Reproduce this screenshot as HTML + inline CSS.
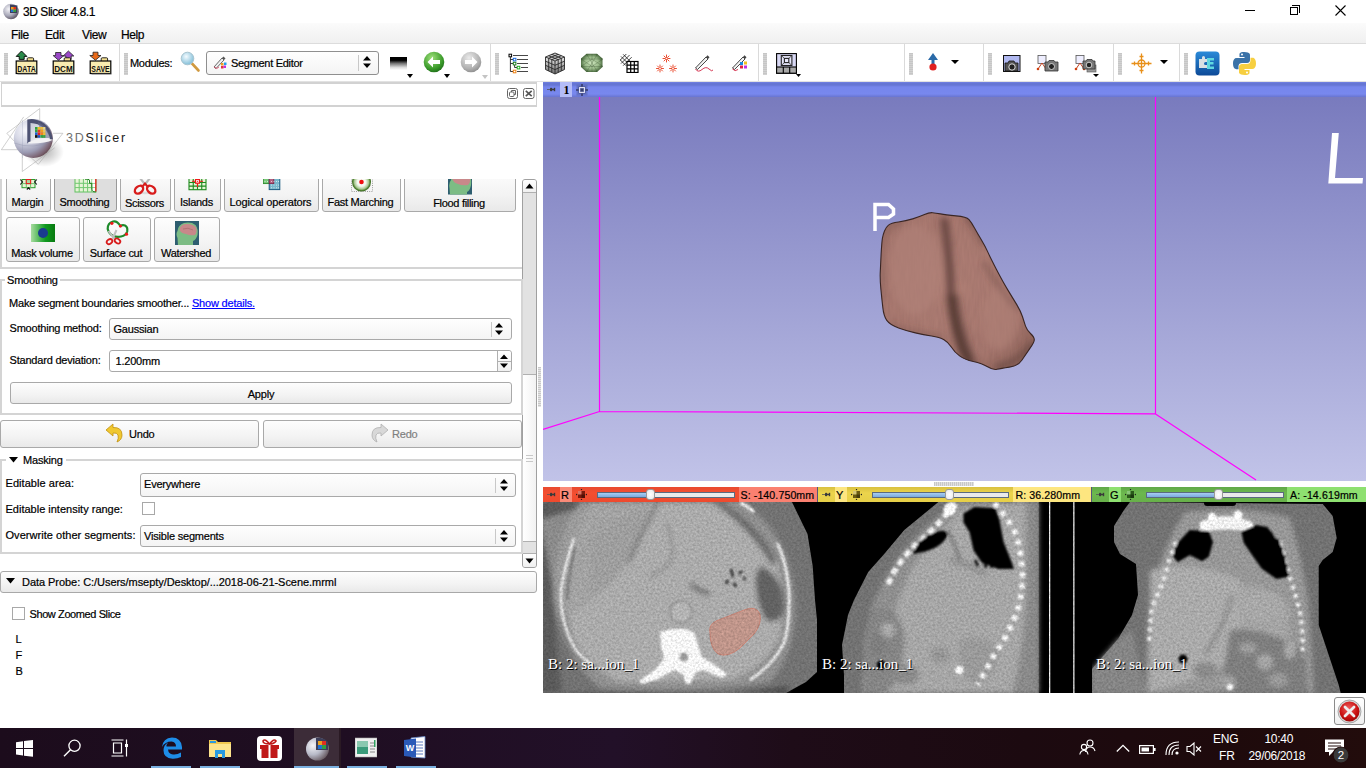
<!DOCTYPE html>
<html><head><meta charset="utf-8">
<style>
*{box-sizing:border-box;margin:0;padding:0}
html,body{width:1366px;height:768px;overflow:hidden;background:#fff;font-family:"Liberation Sans",sans-serif;color:#000}
.a{position:absolute}
.t{position:absolute;white-space:nowrap;font-size:11px;line-height:13px;-webkit-text-stroke:0.2px currentColor}
.btn{position:absolute;border:1px solid #a9a9a9;border-radius:3px;background:linear-gradient(#fdfdfd,#f3f3f3 60%,#e9e9e9)}
.combo{position:absolute;border:1px solid #a9a9a9;border-radius:3px;background:linear-gradient(#fefefe,#f4f4f4)}
.hsep{position:absolute;width:1px;background:#dadada}
.handle{position:absolute;width:4px;height:22px;top:53px;background:repeating-linear-gradient(#c6c6c6 0 1px,#d2d2d2 1px 2px)}
.tri{position:absolute;width:0;height:0;border-left:3.5px solid transparent;border-right:3.5px solid transparent;border-top:4px solid #000}
</style></head><body>

<!-- TITLE BAR -->
<div id="title" class="a" style="left:0;top:0;width:1366px;height:23px;background:#fff">
 <svg class="a" style="left:2px;top:2px" width="18" height="18" viewBox="0 0 18 18">
  <defs><radialGradient id="sph" cx="0.35" cy="0.35" r="0.7"><stop offset="0" stop-color="#f4f4f8"/><stop offset="0.6" stop-color="#a8a8b8"/><stop offset="1" stop-color="#5a5260"/></radialGradient></defs>
  <circle cx="9" cy="9.5" r="7.8" fill="url(#sph)"/>
  <path d="M8 2.5 L15.5 3.5 L15 11 L8 11 Z" fill="#3d3f5a"/>
  <rect x="9" y="5" width="5" height="5" fill="#e8a020"/><rect x="9" y="7.5" width="2.5" height="2.5" fill="#2070d0"/><rect x="11.5" y="5" width="2.5" height="2.5" fill="#e03020"/><rect x="11.5" y="7.5" width="2.5" height="2.5" fill="#30a040"/>
 </svg>
 <div class="t" style="left:23px;top:5px;font-size:12px;line-height:15px;letter-spacing:-0.45px;color:#000">3D Slicer 4.8.1</div>
 <div class="a" style="left:1245px;top:10px;width:10px;height:1px;background:#000"></div>
 <div class="a" style="left:1290px;top:7px;width:8px;height:8px;border:1px solid #000;background:#fff"></div>
 <div class="a" style="left:1292px;top:5px;width:8px;height:8px;border-top:1px solid #000;border-right:1px solid #000"></div>
 <svg class="a" style="left:1335px;top:5px" width="11" height="11" viewBox="0 0 11 11"><path d="M0.5 0.5 L10.5 10.5 M10.5 0.5 L0.5 10.5" stroke="#000" stroke-width="1.1"/></svg>
</div>
<!-- MENU BAR -->
<div id="menubar" class="a" style="left:0;top:23px;width:1366px;height:21px;background:linear-gradient(#fbfbfb,#f0f0f0);border-bottom:1px solid #dcdcdc">
 <div class="t" style="left:11px;top:5px;font-size:12px;line-height:15px;letter-spacing:-0.4px">File</div>
 <div class="t" style="left:45px;top:5px;font-size:12px;line-height:15px;letter-spacing:-0.4px">Edit</div>
 <div class="t" style="left:82px;top:5px;font-size:12px;line-height:15px;letter-spacing:-0.4px">View</div>
 <div class="t" style="left:121px;top:5px;font-size:12px;line-height:15px;letter-spacing:-0.4px">Help</div>
</div>
<!-- TOOLBAR -->
<div id="toolbar" class="a" style="left:0;top:44px;width:1366px;height:38px;background:#fff;border-bottom:1px solid #e2e2e2">
</div>
<div id="tbicons">
 
 <!-- DATA -->
 <svg class="a" style="left:0px;top:48px" width="120" height="30" viewBox="0 48 120 30">
  <path d="M21.5 51 L26.9 56.4 H24.2 V59.4 H19.2 V56.4 H16.2 Z" fill="#2a8a4a" stroke="#000" stroke-width="0.9" stroke-linejoin="round"/>
  <path d="M27.2 61 V58.8 Q27.2 57.8 28.2 57.8 H32.6 Q33.6 57.8 33.6 58.8 V61" fill="#f4e090" stroke="#111" stroke-width="0.9"/>
  <rect x="16.2" y="61" width="20.6" height="12.5" fill="#f8ecb0" stroke="#000" stroke-width="1.2"/>
  <rect x="17.5" y="73.6" width="20" height="1.2" fill="#888" opacity="0.7"/>
  <text x="26.5" y="71.6" font-family="Liberation Sans" font-weight="bold" font-size="9.5" text-anchor="middle" fill="#111" textLength="18.5" lengthAdjust="spacingAndGlyphs">DATA</text>
  <path d="M55.6 52.5 H61 V55.6 H63.8 L58.5 60.2 L53.2 55.6 H55.6 Z" fill="#9a48c8" stroke="#222" stroke-width="0.8" stroke-linejoin="round"/>
  <path d="M68.4 51 L73.8 56 H71.2 V59.5 H65.8 V56 H63.2 Z" fill="#9a48c8" stroke="#222" stroke-width="0.8" stroke-linejoin="round"/>
  <path d="M64.2 61 V58.8 Q64.2 57.8 65.2 57.8 H69.6 Q70.6 57.8 70.6 58.8 V61" fill="#f4e090" stroke="#111" stroke-width="0.9"/>
  <rect x="53.2" y="61" width="20.6" height="12.5" fill="#f8ecb0" stroke="#000" stroke-width="1.2"/>
  <rect x="54.5" y="73.6" width="20" height="1.2" fill="#888" opacity="0.7"/>
  <text x="63.5" y="71.6" font-family="Liberation Sans" font-weight="bold" font-size="9.5" text-anchor="middle" fill="#111" textLength="18.5" lengthAdjust="spacingAndGlyphs">DCM</text>
  <path d="M93 52.2 H98 V55.5 H101 L95.4 60.2 L89.8 55.5 H93 Z" fill="#e86a1a" stroke="#222" stroke-width="0.8" stroke-linejoin="round"/>
  <path d="M101.2 61 V58.8 Q101.2 57.8 102.2 57.8 H106.6 Q107.6 57.8 107.6 58.8 V61" fill="#f4e090" stroke="#111" stroke-width="0.9"/>
  <rect x="90.2" y="61" width="20.6" height="12.5" fill="#f8ecb0" stroke="#000" stroke-width="1.2"/>
  <rect x="91.5" y="73.6" width="20" height="1.2" fill="#888" opacity="0.7"/>
  <text x="100.5" y="71.6" font-family="Liberation Sans" font-weight="bold" font-size="9.5" text-anchor="middle" fill="#111" textLength="18.5" lengthAdjust="spacingAndGlyphs">SAVE</text>
 </svg>
 <div class="handle" style="left:4px"></div>
 <div class="hsep" style="left:119px;top:44px;height:37px"></div>
 <div class="handle" style="left:124px"></div>
 <div class="t" style="left:130px;top:57px;letter-spacing:-0.3px">Modules:</div>
 <!-- magnifier -->
 <svg class="a" style="left:179px;top:50px" width="22" height="23" viewBox="0 0 22 23">
  <defs><radialGradient id="mg" cx="0.4" cy="0.35" r="0.6"><stop offset="0" stop-color="#f4fbff"/><stop offset="1" stop-color="#8cc4dc"/></radialGradient></defs>
  <line x1="13" y1="13.5" x2="19.5" y2="20.5" stroke="#d09a40" stroke-width="2.6" stroke-linecap="round"/>
  <circle cx="8.5" cy="8.5" r="6.3" fill="url(#mg)" stroke="#a8c4d0" stroke-width="1"/>
 </svg>
 <!-- module combo -->
 <div class="combo" style="left:206px;top:51px;width:173px;height:24px;border-color:#8f8f8f">
  <div class="a" style="left:151px;top:3px;width:1px;height:16px;background:#c8c8c8"></div>
 </div>
 <svg class="a" style="left:213px;top:55px" width="14" height="15" viewBox="0 0 14 15">
  <path d="M1 12 L9 3 L11 5 L3 13.5 Z" fill="#f0f0f0" stroke="#444" stroke-width="0.8"/>
  <path d="M9 3 L10.5 1.5 L12.5 3.5 L11 5Z" fill="#555"/>
  <path d="M1 12 Q4 15 6 12" stroke="#e04060" fill="none" stroke-width="0.8"/>
  <rect x="8" y="8" width="2.5" height="2.5" fill="#f0a020"/><rect x="10.5" y="10.5" width="2.5" height="2.5" fill="#c030e0"/><rect x="8" y="11" width="2.5" height="2.5" fill="#e03040"/><rect x="11" y="7.5" width="2.5" height="2.5" fill="#20a0f0"/>
 </svg>
 <div class="t" style="left:231px;top:57px;letter-spacing:-0.3px">Segment Editor</div>
 <svg class="a" style="left:362px;top:55px" width="10" height="14" viewBox="0 0 10 14"><path d="M1 5.5 L5 1 L9 5.5Z M1 8.5 L5 13 L9 8.5Z" fill="#000"/></svg>
 <!-- window level -->
 <div class="a" style="left:390px;top:57px;width:17px;height:13px;background:linear-gradient(#000 0,#000 25%,#777 50%,#ddd 80%,#fff 100%)"></div>
 <div class="tri" style="left:407px;top:74px"></div>
 <!-- back -->
 <svg class="a" style="left:423px;top:51px" width="22" height="22" viewBox="0 0 22 22">
  <defs><radialGradient id="gb" cx="0.4" cy="0.3" r="0.75"><stop offset="0" stop-color="#9ee07a"/><stop offset="0.7" stop-color="#3a9a2a"/><stop offset="1" stop-color="#1d6a18"/></radialGradient>
  <radialGradient id="gg" cx="0.4" cy="0.3" r="0.75"><stop offset="0" stop-color="#eaeaea"/><stop offset="0.7" stop-color="#b0b0b0"/><stop offset="1" stop-color="#8a8a8a"/></radialGradient></defs>
  <circle cx="11" cy="11" r="10.3" fill="url(#gb)"/>
  <path d="M4.5 11 L10 5.5 L10 9 L17 9 L17 13 L10 13 L10 16.5 Z" fill="#fff"/>
 </svg>
 <div class="tri" style="left:444px;top:74px"></div>
 <svg class="a" style="left:460px;top:51px" width="22" height="22" viewBox="0 0 22 22">
  <circle cx="11" cy="11" r="10.3" fill="url(#gg)"/>
  <path d="M17.5 11 L12 5.5 L12 9 L5 9 L5 13 L12 13 L12 16.5 Z" fill="#fff"/>
 </svg>
 <div class="tri" style="left:482px;top:75px;border-top-color:#c4c4c4"></div>
 <div class="hsep" style="left:490px;top:44px;height:37px"></div>
 <div class="handle" style="left:495px"></div>
 <!-- tree -->
 <svg class="a" style="left:508px;top:53px" width="21" height="21" viewBox="508 53 21 21">
  <path d="M510.4 57 V71.5 H513 M510.4 59.5 H513 M510.4 63.5 H513 M514.6 65 V67.5 H517" stroke="#222" stroke-width="0.9" fill="none"/>
  <rect x="509" y="54.2" width="2.6" height="2.6" fill="#fff" stroke="#000" stroke-width="1"/>
  <rect x="513.3" y="58.3" width="2.6" height="2.6" fill="#fff" stroke="#1a6ae0" stroke-width="1"/>
  <rect x="513.3" y="62.3" width="2.6" height="2.6" fill="#fff" stroke="#208020" stroke-width="1"/>
  <rect x="517.2" y="66.3" width="2.6" height="2.6" fill="#fff" stroke="#20b020" stroke-width="1"/>
  <rect x="513.3" y="70.2" width="2.6" height="2.6" fill="#fff" stroke="#f08010" stroke-width="1"/>
  <path d="M513 55.5 H528 M517 59.5 H528 M517 63.5 H528 M521 67.5 H528 M517 71.5 H528" stroke="#333" stroke-width="0.9"/>
 </svg>
 <!-- cube -->
 <svg class="a" style="left:543px;top:51px" width="24" height="24" viewBox="0 0 24 24">
  <defs><linearGradient id="cbf" x1="0" y1="0" x2="0" y2="1"><stop offset="0" stop-color="#e8e8e8"/><stop offset="1" stop-color="#707070"/></linearGradient></defs>
  <path d="M12 2 L21.5 6 L12 10 L2.5 6Z" fill="#c8c8c8"/>
  <path d="M2.5 6 L12 10 L12 23 L2.5 18.5Z" fill="url(#cbf)"/>
  <path d="M21.5 6 L12 10 L12 23 L21.5 18.5Z" fill="url(#cbf)"/>
  <g stroke="#2a2a2a" stroke-width="0.9" fill="none">
   <path d="M12 2 L21.5 6 L12 10 L2.5 6Z M2.5 6 V18.5 L12 23 L21.5 18.5 V6 M12 10 V23"/>
   <path d="M5.7 4.7 L15.2 8.7 M8.8 3.3 L18.3 7.3 M5.7 7.3 L15.2 3.3 M8.8 8.7 L18.3 4.7"/>
   <path d="M2.5 10.2 L12 14.3 L21.5 10.2 M2.5 14.3 L12 18.6 L21.5 14.3"/>
   <path d="M5.7 7.3 V20 M8.8 8.7 V21.5 M15.2 8.7 V21.5 M18.3 7.3 V20"/>
  </g>
 </svg>
 <!-- mesh -->
 <svg class="a" style="left:580px;top:53px" width="24" height="20" viewBox="0 0 24 20">
  <defs><radialGradient id="msh" cx="0.5" cy="0.5" r="0.55"><stop offset="0" stop-color="#d0e8c0"/><stop offset="0.6" stop-color="#98b888"/><stop offset="1" stop-color="#3e5e34"/></radialGradient></defs>
  <path d="M6.5 0.8 H17 L22.5 5.5 V14 L17 19 H6.5 L1 14 V5.5Z" fill="url(#msh)"/>
  <path d="M1 6 H23 M1 13.5 H23 M12 1 V19 M6.5 1 L17.5 19 M17.5 1 L6.5 19 M1 6 L12 13.5 L23 6 M1 13.5 L12 6 L23 13.5" stroke="#2e4a26" stroke-width="0.5" opacity="0.55" fill="none"/>
 </svg>
 <!-- grid -->
 <svg class="a" style="left:620px;top:54px" width="19" height="19" viewBox="0 0 19 19">
  <g transform="rotate(-45 6 6)"><path d="M0 2 H12 M0 5 H12 M0 8 H12 M2 0 V10 M5 0 V10 M8 0 V10" stroke="#222" stroke-width="0.8"/></g>
  <rect x="7" y="7.5" width="11" height="11" fill="#fff" stroke="#000" stroke-width="1.2"/>
  <path d="M10.7 7.5 V18.5 M14.3 7.5 V18.5 M7 11.2 H18 M7 14.8 H18" stroke="#000" stroke-width="1.2"/>
 </svg>
 <!-- fiducials -->
 <svg class="a" style="left:656px;top:54px" width="21" height="19" viewBox="0 0 21 19">
  <g stroke="#e83a1a" stroke-width="0.9" stroke-linecap="round">
   <path d="M10.5 1 V3.5 M10.5 5.5 V8 M7 4.5 H9.3 M11.7 4.5 H14 M8 2 L9.5 3.5 M11.5 5.5 L13 7 M13 2 L11.5 3.5 M9.5 5.5 L8 7"/>
   <path d="M4 11 V13.5 M4 15.5 V18 M0.5 14.5 H2.8 M5.2 14.5 H7.5 M1.5 12 L3 13.5 M5 15.5 L6.5 17 M6.5 12 L5 13.5 M3 15.5 L1.5 17"/>
   <path d="M17 11 V13.5 M17 15.5 V18 M13.5 14.5 H15.8 M18.2 14.5 H20.5 M14.5 12 L16 13.5 M18 15.5 L19.5 17 M19.5 12 L18 13.5 M16 15.5 L14.5 17"/>
  </g>
 </svg>
 <!-- pen -->
 <svg class="a" style="left:694px;top:54px" width="20" height="19" viewBox="0 0 20 19">
  <path d="M1.5 14 L12 3 L14 5 L3.5 15.5Z" fill="#f2f2f2" stroke="#333" stroke-width="0.9"/>
  <path d="M12 3 L13.5 1.3 L15.5 3.3 L14 5Z" fill="#444"/>
  <path d="M1.5 15 Q4 19 8 15.5 T15 15 T19 16" stroke="#d02040" fill="none" stroke-width="0.9"/>
 </svg>
 <!-- pen color -->
 <svg class="a" style="left:732px;top:54px" width="18" height="19" viewBox="0 0 18 19">
  <path d="M0.5 14 L11 3 L13 5 L2.5 15.5Z" fill="#f2f2f2" stroke="#333" stroke-width="0.9"/>
  <path d="M11 3 L12.5 1.3 L14.5 3.3 L13 5Z" fill="#444"/>
  <path d="M0.5 15 Q3 18 6 15.5" stroke="#d02040" fill="none" stroke-width="0.9"/>
  <rect x="8" y="8" width="3" height="3" fill="#1a8ae0"/><rect x="12" y="7.5" width="3" height="3" fill="#f0c020"/><rect x="8" y="11.5" width="3" height="3" fill="#e02040"/><rect x="12" y="11.5" width="3" height="3" fill="#c030e0"/>
 </svg>
 <div class="hsep" style="left:758px;top:44px;height:37px"></div>
 <div class="handle" style="left:763px"></div>
 <!-- layout -->
 <svg class="a" style="left:774px;top:51px" width="30" height="28" viewBox="774 51 30 28">
  <rect x="776.6" y="53.6" width="19.8" height="19.6" fill="#d8d8f4" stroke="#000" stroke-width="1.1"/>
  <rect x="781.3" y="55.5" width="10.6" height="10" fill="#e6e6fa" stroke="#222" stroke-width="1.1"/>
  <rect x="784.4" y="58.4" width="4.4" height="4.2" fill="#e8e8fc" stroke="#222" stroke-width="1.1"/>
  <path d="M781.8 56 L784.4 58.4 M791.4 56 L788.8 58.4 M781.8 65 L784.4 62.6 M791.4 65 L788.8 62.6" stroke="#333" stroke-width="0.8"/>
  <rect x="776.6" y="67" width="19.8" height="6.2" fill="#a8a8a8" stroke="#000" stroke-width="1.1"/>
  <path d="M783.3 67 V73.2 M789.7 67 V73.2" stroke="#000" stroke-width="1.1"/>
  <path d="M796 74 H801 L798.5 77 Z" fill="#000"/>
 </svg>
 <div class="hsep" style="left:904px;top:44px;height:37px"></div>
 <div class="handle" style="left:909px"></div>
 <svg class="a" style="left:927px;top:53px" width="12" height="19" viewBox="0 0 12 19">
  <path d="M6 0 L11 7 L7.5 7 L7.5 12 L4.5 12 L4.5 7 L1 7Z" fill="#2a6aa8"/>
  <circle cx="6" cy="14" r="3.6" fill="#e02020"/>
 </svg>
 <div class="tri" style="left:951px;top:60px;border-left-width:4.5px;border-right-width:4.5px"></div>
 <div class="hsep" style="left:983px;top:44px;height:37px"></div>
 <div class="handle" style="left:988px"></div>
 <!-- cameras -->
 <svg class="a" style="left:1003px;top:55px" width="18" height="18" viewBox="0 0 18 18">
  <rect x="0.5" y="0.5" width="16.5" height="16" fill="#b0b8f0" stroke="#111" stroke-width="1"/>
  <path d="M2 8 h3 l1 -2 h5 l1 2 h3 v8 h-13z" fill="#555" stroke="#111" stroke-width="0.8"/>
  <circle cx="9" cy="12" r="3.2" fill="#222" stroke="#ddd" stroke-width="1"/>
 </svg>
 <svg class="a" style="left:1036px;top:55px" width="23" height="18" viewBox="0 0 23 18">
  <rect x="2" y="0.5" width="8" height="8" fill="#eef" stroke="#555" stroke-width="0.8"/>
  <path d="M6 8 L2 14 M6 8 L10 14" stroke="#c04020" stroke-width="1"/>
  <circle cx="2" cy="14" r="1.3" fill="#d04010"/><circle cx="10" cy="14" r="1.3" fill="#d04010"/>
  <path d="M9 7 h3 l1 -1.5 h5 l1 1.5 h3 v9 h-13z" fill="#777" stroke="#333" stroke-width="0.8"/>
  <circle cx="15.5" cy="11.5" r="3" fill="#222" stroke="#ddd" stroke-width="0.9"/>
 </svg>
 <svg class="a" style="left:1074px;top:55px" width="25" height="22" viewBox="0 0 25 22">
  <rect x="2" y="0.5" width="8" height="8" fill="#eef" stroke="#555" stroke-width="0.8"/>
  <path d="M6 8 L2 14 M6 8 L10 14" stroke="#c04020" stroke-width="1"/>
  <circle cx="2" cy="14" r="1.3" fill="#d04010"/><circle cx="10" cy="14" r="1.3" fill="#d04010"/>
  <rect x="13" y="10" width="9" height="7" fill="#999" stroke="#555" stroke-width="0.6"/>
  <path d="M9 6 h3 l1 -1.5 h5 l1 1.5 h2 v8 h-12z" fill="#777" stroke="#333" stroke-width="0.8"/>
  <circle cx="15" cy="10" r="2.8" fill="#222" stroke="#ddd" stroke-width="0.9"/>
  <path d="M19 19 L25 19 L22 22Z" fill="#000"/>
 </svg>
 <div class="hsep" style="left:1113px;top:44px;height:37px"></div>
 <div class="handle" style="left:1118px"></div>
 <svg class="a" style="left:1131px;top:53px" width="21" height="21" viewBox="0 0 21 21">
  <g stroke="#e8901a" stroke-width="1.3" fill="none">
   <path d="M10.5 0.5 V20.5 M0.5 10.5 H20.5"/>
   <circle cx="10.5" cy="10.5" r="3.5"/>
   <path d="M8.5 3.5 H12.5 M8.5 17.5 H12.5 M3.5 8.5 V12.5 M17.5 8.5 V12.5"/>
  </g>
 </svg>
 <div class="tri" style="left:1160px;top:60px;border-left-width:4.5px;border-right-width:4.5px"></div>
 <div class="hsep" style="left:1179px;top:44px;height:37px"></div>
 <div class="handle" style="left:1184px"></div>
 <!-- extension -->
 <svg class="a" style="left:1195px;top:51px" width="25" height="25" viewBox="0 0 25 25">
  <defs><linearGradient id="ext" x1="0" y1="0" x2="0" y2="1"><stop offset="0" stop-color="#2a8ad8"/><stop offset="1" stop-color="#0d4a98"/></linearGradient></defs>
  <rect x="0.5" y="0.5" width="24" height="24" rx="4" fill="url(#ext)"/>
  <path d="M4 8 H7 V6.5 A1.5 1.5 0 0 1 10 6.5 V8 H12 V11 H10.5 A1.5 1.5 0 0 0 10.5 14 H12 V17 H4 Z" fill="#d8e0e4"/>
  <path d="M12 7 h7 v2.5 h-4 v1.5 h3.5 v2.5 h-3.5 v2 h4 v2.5 h-7z" fill="#60d8e0"/>
 </svg>
 <!-- python -->
 <svg class="a" style="left:1232px;top:51px" width="25" height="25" viewBox="0 0 25 25">
  <path d="M12.3 1 C7 1 7.5 3.3 7.5 3.3 V6 H12.5 V7 H5 C5 7 1 6.6 1 12.5 C1 18.4 4.5 18.2 4.5 18.2 H6.5 V15.5 C6.5 15.5 6.4 12 10 12 H15 C15 12 18 12 18 9 V4 C18 4 18.5 1 12.3 1Z" fill="#3a72a8"/>
  <circle cx="10" cy="3.6" r="1" fill="#fff"/>
  <path d="M12.7 24 C18 24 17.5 21.7 17.5 21.7 V19 H12.5 V18 H20 C20 18 24 18.4 24 12.5 C24 6.6 20.5 6.8 20.5 6.8 H18.5 V9.5 C18.5 9.5 18.6 13 15 13 H10 C10 13 7 13 7 16 V21 C7 21 6.5 24 12.7 24Z" fill="#f7cf40"/>
  <circle cx="15" cy="21.4" r="1" fill="#fff"/>
 </svg>
</div>

<!-- LEFT PANEL -->
<div id="panel" class="a" style="left:0;top:82px;width:543px;height:646px;background:#fff"></div>
<div id="panelc">
 <div class="a" style="left:1px;top:82px;width:536px;height:25px;border:1px solid #d2d2d2;border-top-width:2px;border-bottom-width:2px;background:#fff"></div>
 <svg class="a" style="left:507px;top:88px" width="28" height="11" viewBox="0 0 28 11">
  <rect x="0.5" y="0.5" width="10" height="10" rx="2" fill="none" stroke="#666" stroke-width="1"/>
  <rect x="2.5" y="4" width="4.5" height="4.5" rx="1" fill="none" stroke="#666" stroke-width="1"/>
  <path d="M4.5 4 V2.5 H8.5 V6.5 H7" fill="none" stroke="#666" stroke-width="1"/>
  <rect x="16.5" y="0.5" width="10.5" height="10" rx="2" fill="none" stroke="#666" stroke-width="1"/>
  <path d="M18.8 2.8 L24.7 8.2 M24.7 2.8 L18.8 8.2" stroke="#555" stroke-width="1.6"/>
 </svg>
 <svg class="a" style="left:0px;top:105px" width="70" height="70" viewBox="0 105 70 70">
  <defs>
   <radialGradient id="lsph" cx="0.3" cy="0.3" r="0.85"><stop offset="0" stop-color="#f8f8fc"/><stop offset="0.35" stop-color="#d4d6e4"/><stop offset="0.65" stop-color="#9c9cb4"/><stop offset="0.85" stop-color="#7a6270"/><stop offset="1" stop-color="#4a2e2e"/></radialGradient>
   <radialGradient id="lsh" cx="0.5" cy="0.5" r="0.5"><stop offset="0" stop-color="#000" stop-opacity="0.3"/><stop offset="1" stop-color="#000" stop-opacity="0"/></radialGradient>
   <linearGradient id="lin" x1="0" y1="0" x2="1" y2="1"><stop offset="0" stop-color="#c8ccd8"/><stop offset="1" stop-color="#f4f4f6"/></linearGradient>
  </defs>
  <ellipse cx="44" cy="152" rx="20" ry="15" fill="url(#lsh)"/>
  <g stroke="#a8a8a8" stroke-width="0.55" fill="none">
   <path d="M39.7 108.6 L6.8 133.3 L22.3 149.7 M1.4 149.7 L23.7 116.9 M1.4 149.7 H22.3 M62.9 133.3 H52.9 M62.9 133.3 L38.3 164.3 L27.3 154.2 M22.3 149.7 V171.5 L54.7 147.8 M39.7 108.6 V120"/>
  </g>
  <circle cx="33.3" cy="138.5" r="19.5" fill="url(#lsph)"/>
  <path d="M22.3 120 V158" stroke="#9098b0" stroke-width="0.5" opacity="0.7"/>
  <path d="M14 143 Q33 150 52.8 141" stroke="#8a90a8" stroke-width="0.5" fill="none" opacity="0.7"/>
  <path d="M27.3 119.6 Q31 118.6 34 119.2 Q50 122 52.9 139.6 L27.3 143.3 Z" fill="#4d5272"/>
  <path d="M30.5 123 Q46 124 50 138.7 L30.5 141.5 Z" fill="url(#lin)"/>
  <path d="M38 122 Q48 127 50 138 L42 138 Z" fill="#6a7090" opacity="0.6"/>
  <g>
   <rect x="35" y="127" width="2.7" height="2.7" fill="#30a040"/><rect x="37.7" y="127" width="2.7" height="2.7" fill="#f0c020"/><rect x="40.4" y="127" width="2.7" height="2.7" fill="#f0c040"/><rect x="43.1" y="127" width="2.3" height="2.7" fill="#e8d890"/>
   <rect x="35" y="129.7" width="2.7" height="2.7" fill="#30a040"/><rect x="37.7" y="129.7" width="2.7" height="2.7" fill="#e04020"/><rect x="40.4" y="129.7" width="2.7" height="2.7" fill="#f0a020"/><rect x="43.1" y="129.7" width="2.3" height="2.7" fill="#e8c860"/>
   <rect x="35" y="132.4" width="2.7" height="2.7" fill="#2060d0"/><rect x="37.7" y="132.4" width="2.7" height="2.7" fill="#e02020"/><rect x="40.4" y="132.4" width="2.7" height="2.7" fill="#f08020"/><rect x="43.1" y="132.4" width="2.3" height="2.7" fill="#f0c030"/>
   <rect x="35" y="135.1" width="2.7" height="2.7" fill="#111"/><rect x="37.7" y="135.1" width="2.7" height="2.7" fill="#2050c0"/><rect x="40.4" y="135.1" width="2.7" height="2.7" fill="#30a040"/><rect x="43.1" y="135.1" width="2.3" height="2.7" fill="#40a040"/>
  </g>
  <path d="M28 142.5 Q40 136 53 139.8 Q45 144 28 143.5Z" fill="#f2f2f4"/>
 </svg>
 <div class="t" style="left:66px;top:131px;font-size:12.5px;line-height:15px;letter-spacing:1.7px;color:#1a1a1a;-webkit-text-stroke:0"><span style="color:#707070">3D</span>Slicer</div>
 <div class="a" style="left:0px;top:179px;width:522px;height:90px;border-left:2px solid #d4d4d4;border-bottom:2px solid #d4d4d4"></div>
 <div id="effects" class="a" style="left:2px;top:179px;width:520px;height:89px;overflow:hidden">
  <div class="btn" style="left:4px;top:-9px;width:45px;height:42px;"></div>
  <div class="t" style="left:3.0px;top:17.1px;width:45px;text-align:center;letter-spacing:-0.3px">Margin</div>
  <div class="btn" style="left:52px;top:-9px;width:63px;height:42px;background:#dedede;border-color:#9a9a9a"></div>
  <div class="t" style="left:51.0px;top:17.1px;width:63px;text-align:center;letter-spacing:-0.3px">Smoothing</div>
  <div class="btn" style="left:118px;top:-9px;width:51px;height:42px;"></div>
  <div class="t" style="left:117.0px;top:18.1px;width:51px;text-align:center;letter-spacing:-0.3px">Scissors</div>
  <div class="btn" style="left:172px;top:-9px;width:47px;height:42px;"></div>
  <div class="t" style="left:171.0px;top:17.1px;width:47px;text-align:center;letter-spacing:-0.3px">Islands</div>
  <div class="btn" style="left:222px;top:-9px;width:95px;height:42px;"></div>
  <div class="t" style="left:221.0px;top:17.1px;width:95px;text-align:center;letter-spacing:-0.15px">Logical operators</div>
  <div class="btn" style="left:320px;top:-9px;width:79px;height:42px;"></div>
  <div class="t" style="left:319.0px;top:17.1px;width:79px;text-align:center;letter-spacing:-0.3px">Fast Marching</div>
  <div class="btn" style="left:402px;top:-9px;width:112px;height:42px;"></div>
  <div class="t" style="left:401.0px;top:17.9px;width:112px;text-align:center;letter-spacing:-0.3px">Flood filling</div>
  <div class="btn" style="left:4px;top:38px;width:74px;height:45px;"></div>
  <div class="t" style="left:3.0px;top:67.8px;width:74px;text-align:center;letter-spacing:-0.3px">Mask volume</div>
  <div class="btn" style="left:81px;top:38px;width:68px;height:45px;"></div>
  <div class="t" style="left:80.0px;top:67.8px;width:68px;text-align:center;letter-spacing:-0.3px">Surface cut</div>
  <div class="btn" style="left:152px;top:38px;width:66px;height:45px;"></div>
  <div class="t" style="left:151.0px;top:67.8px;width:66px;text-align:center;letter-spacing:-0.3px">Watershed</div>
  <!-- row1 icons (top clipped) -->
  <svg class="a" style="left:17px;top:-4px" width="24" height="16" viewBox="19 175 24 16"><rect x="22" y="179.5" width="13" height="8.2" fill="#e6f4d6" stroke="#2a9a2a" stroke-width="1"/><path d="M22 183.6 H35 M26.3 179.5 V187.7 M30.6 179.5 V187.7" stroke="#70c070" stroke-width="1"/><rect x="26.3" y="179.5" width="4.3" height="4.1" fill="#a8d8a0" stroke="#e82020" stroke-width="1.1"/><path d="M20.3 179.5 L22.5 182 L20.3 184.5 M36.8 179.5 L34.6 182 L36.8 184.5 M26.8 189.5 L28.5 187.8 L30.2 189.5" stroke="#111" stroke-width="1.1" fill="none"/></svg>
  <svg class="a" style="left:72px;top:-4px" width="26" height="18" viewBox="74 175 26 18"><rect x="75" y="175" width="21" height="17" fill="#e6f4d6" stroke="#60c060" stroke-width="1"/><path d="M75 183.3 H96 M75 187.6 H96 M79.2 175 V192 M83.4 175 V192 M87.6 175 V192 M91.8 175 V192" stroke="#70c870" stroke-width="1"/><rect x="92.3" y="179.5" width="3.2" height="3.4" fill="#fff"/><rect x="92.3" y="183.8" width="3.2" height="3.4" fill="#fff"/><rect x="92.3" y="188.1" width="3.2" height="3.4" fill="#fff"/><rect x="88.1" y="179.5" width="3.2" height="3.4" fill="#fff"/><path d="M85 179.2 H87.6 Q89.6 179.2 89.6 181 V183.3 H91.8 V187.6 Q91.8 191.8 94 191.8 H96" stroke="#1a7a1a" stroke-width="1" fill="none"/><path d="M95.8 179 V191.5" stroke="#e82020" stroke-width="1.3"/></svg>
  <svg class="a" style="left:130px;top:-2px" width="28" height="18" viewBox="132 177 28 18"><path d="M140 178 L145.5 185 M150 178 L144.5 185" stroke="#b8b8b8" stroke-width="2.2"/><ellipse cx="145" cy="193" rx="5" ry="1.2" fill="#ccc" opacity="0.6"/><ellipse cx="139" cy="189.7" rx="4.6" ry="3.3" transform="rotate(-40 139 189.7)" fill="none" stroke="#d81c1c" stroke-width="2.4"/><ellipse cx="151.2" cy="189.7" rx="4.6" ry="3.3" transform="rotate(40 151.2 189.7)" fill="none" stroke="#d81c1c" stroke-width="2.4"/><path d="M142.5 186.5 L145 183.5 L147.5 186.5" stroke="#d81c1c" stroke-width="2" fill="none"/></svg>
  <svg class="a" style="left:186px;top:-2px" width="22" height="14" viewBox="188 177 22 14"><rect x="189" y="177" width="17" height="12.7" fill="#e6f4d6" stroke="#1e8a1e" stroke-width="1.1"/><path d="M189 182.5 H206 M189 186.1 H206 M193.25 177 V189.7 M197.5 177 V189.7 M201.75 177 V189.7" stroke="#1e8a1e" stroke-width="1.1"/><rect x="195.6" y="179.4" width="3.8" height="3.8" fill="#fff" stroke="#f01818" stroke-width="1.2"/><rect x="197" y="180.8" width="1" height="1" fill="#f01818"/><path d="M192 181.3 H195.6 M199.4 181.3 H203 M197.5 183.2 V187" stroke="#f01818" stroke-width="1.1"/></svg>
  <svg class="a" style="left:261px;top:-2px" width="20" height="14" viewBox="263 177 20 14"><rect x="263.3" y="177" width="10.5" height="6.6" fill="#78c878" stroke="#2a8a2a" stroke-width="0.9"/><rect x="269.2" y="177" width="10.6" height="12.6" fill="#78b8cc" stroke="#1a5a80" stroke-width="1"/><rect x="269.2" y="177" width="4.6" height="6.6" fill="#b06080" stroke="#802040" stroke-width="0.8"/><g fill="#fff" opacity="0.85"><circle cx="265" cy="181.5" r="0.5"/><circle cx="267.5" cy="181.5" r="0.5"/><circle cx="271.5" cy="185" r="0.5"/><circle cx="274" cy="185" r="0.5"/><circle cx="276.5" cy="185" r="0.5"/><circle cx="271.5" cy="187.7" r="0.5"/><circle cx="274" cy="187.7" r="0.5"/><circle cx="276.5" cy="187.7" r="0.5"/><circle cx="276.5" cy="181.5" r="0.5"/><circle cx="274" cy="181.5" r="0.5"/><circle cx="271.5" cy="181.5" r="0.5"/><circle cx="278.5" cy="181.5" r="0.5"/><circle cx="278.5" cy="185" r="0.5"/><circle cx="278.5" cy="187.7" r="0.5"/></g></svg>
  <svg class="a" style="left:349px;top:-6px" width="24" height="20" viewBox="351 173 24 20"><defs><radialGradient id="fmg" cx="0.5" cy="0.5" r="0.5"><stop offset="0" stop-color="#fff"/><stop offset="0.45" stop-color="#f4f8ee"/><stop offset="0.75" stop-color="#a8c890"/><stop offset="0.9" stop-color="#4e7e30"/><stop offset="1" stop-color="#3a6a20"/></radialGradient></defs><rect x="351.5" y="173" width="21" height="18.5" fill="none" stroke="#777" stroke-width="0.7" stroke-dasharray="1 1.2"/><circle cx="361.5" cy="182" r="9.5" fill="url(#fmg)"/><circle cx="361.5" cy="182" r="2.3" fill="#f01010"/></svg>
  <svg class="a" style="left:446px;top:-6px" width="24" height="22" viewBox="448 173 24 22"><rect x="448" y="173" width="24" height="21.5" fill="#2e5e70"/><path d="M450 194.5 L449.5 188 Q448.5 183 451 180 Q452 174 459 173 Q467 172.5 470.5 177 Q472 182 470.5 187 Q469.5 191 467 192 L467 194.5Z" fill="#7cbc84"/><path d="M452 178 Q453 173 460 173 Q467 173 470 177 Q471 182 468 185 Q462 186 458 184 Q453 183 452 178Z" fill="#c8888a"/></svg>
  <!-- row2 icons -->
  <div class="a" style="left:29px;top:45px;width:24px;height:18px;background:linear-gradient(90deg,#a8dca0,#109a20 60%,#087a10)"><div class="a" style="left:7px;top:4px;width:10px;height:10px;border-radius:50%;background:#1a3a90"></div></div>
  <svg class="a" style="left:103px;top:40px" width="27" height="28" viewBox="105 219 27 28"><path d="M120.4 226 Q117 220.5 113 221.5 Q107.5 223 107.7 229 Q109 234 113.5 236 Q117 237.5 121 236.5 Q126 235.5 127.2 231.5 Q128 227 125 225.5 Q122.5 224.5 120.4 226Z" fill="none" stroke="#1e8a2a" stroke-width="2.2"/><circle cx="111.9" cy="223.3" r="1.6" fill="#f01818"/><circle cx="120.4" cy="226" r="1.6" fill="#f01818"/><circle cx="126.5" cy="234.2" r="1.6" fill="#f01818"/><path d="M108.5 231 L114.5 239 M116.5 230 L112.5 239" stroke="#c0c0c0" stroke-width="2"/><ellipse cx="109.5" cy="241.6" rx="3" ry="2.2" transform="rotate(-35 109.5 241.6)" fill="none" stroke="#d81c1c" stroke-width="1.8"/><ellipse cx="117.5" cy="241" rx="3" ry="2.2" transform="rotate(35 117.5 241)" fill="none" stroke="#d81c1c" stroke-width="1.8"/></svg>
  <svg class="a" style="left:173px;top:42px" width="24" height="24" viewBox="175 221 24 24"><rect x="175" y="221" width="24" height="24" fill="#2e5e70"/><path d="M178 245 L177.5 238 Q175.5 234 177.5 231 Q178 225 184 223 Q191 221.5 195.5 225 Q198.5 229 197.5 235 Q196 240 193 241 L193 245Z" fill="#7cbc84"/><path d="M179.5 230 Q180 224.5 186 224 Q193 223.5 196 227.5 Q197.5 232 195 235 Q190 236 186 234 Q181 233.5 179.5 230Z" fill="#c8888a"/><path d="M183 229 Q188 227 193 230" stroke="#a86a6c" stroke-width="0.7" fill="none"/></svg>
 </div>
 <div class="a" style="left:522px;top:179px;width:15px;height:389px;border:1px solid #a0a0a0;border-radius:3px;background:#e2e2e2"></div>
 <div class="a" style="left:523px;top:180px;width:13px;height:13px;background:linear-gradient(#fff,#f0f0f0);border-bottom:1px solid #b0b0b0;border-radius:2px 2px 0 0"></div>
 <svg class="a" style="left:525px;top:183px" width="9" height="6" viewBox="0 0 9 6"><path d="M0.5 5.5 L4.5 0.5 L8.5 5.5Z" fill="#000"/></svg>
 <div class="a" style="left:523px;top:374px;width:13px;height:168px;background:linear-gradient(90deg,#fff,#f2f2f2);border-top:1px solid #b0b0b0;border-bottom:1px solid #b0b0b0"></div>
 <div class="a" style="left:526px;top:455px;width:7px;height:8px;background:repeating-linear-gradient(#c8c8c8 0 1.5px,transparent 1.5px 3px)"></div>
 <div class="a" style="left:523px;top:553px;width:13px;height:14px;background:linear-gradient(#fff,#f0f0f0);border-top:1px solid #b0b0b0;border-radius:0 0 2px 2px"></div>
 <svg class="a" style="left:525px;top:558px" width="9" height="6" viewBox="0 0 9 6"><path d="M0.5 0.5 L4.5 5.5 L8.5 0.5Z" fill="#000"/></svg>
 <div class="a" style="left:538px;top:367px;width:3px;height:40px;background:repeating-linear-gradient(#c8c8c8 0 1px,#e4e4e4 1px 2px)"></div>
 <div class="a" style="left:0px;top:279px;width:523px;height:136px;border:2px solid #d4d4d4"></div>
 <div class="t" style="left:5px;top:273.7px;background:#fff;padding:0 2px;letter-spacing:-0.2px">Smoothing</div>
 <div class="t" style="left:9px;top:296.7px;letter-spacing:-0.2px">Make segment boundaries smoother... <span style="color:#0000ff;text-decoration:underline">Show details.</span></div>
 <div class="t" style="left:9.5px;top:321.7px;letter-spacing:-0.2px">Smoothing method:</div>
 <div class="combo" style="left:109px;top:318px;width:403px;height:22px"><div class="a" style="left:381px;top:3px;width:1px;height:15px;background:#c8c8c8"></div></div>
 <svg class="a" style="left:494px;top:322px" width="10" height="14" viewBox="0 0 10 14"><path d="M1 5.5 L5 1 L9 5.5Z M1 8.5 L5 13 L9 8.5Z" fill="#000"/></svg>
 <div class="t" style="left:113.5px;top:322.7px;letter-spacing:-0.2px">Gaussian</div>
 <div class="t" style="left:9.5px;top:353.7px;letter-spacing:-0.2px">Standard deviation:</div>
 <div class="combo" style="left:109px;top:350px;width:403px;height:22px;background:#fff"></div>
 <div class="a" style="left:497px;top:351px;width:14px;height:20px;border-left:1px solid #b0b0b0;background:linear-gradient(#fff,#f0f0f0);border-radius:0 3px 3px 0"></div>
 <div class="a" style="left:497px;top:361px;width:14px;height:1px;background:#b0b0b0"></div>
 <svg class="a" style="left:499px;top:353px" width="10" height="17" viewBox="0 0 10 17"><path d="M1 6 L5 1.5 L9 6Z M1 10.5 L5 15 L9 10.5Z" fill="#000"/></svg>
 <div class="t" style="left:115.5px;top:354.7px;letter-spacing:-0.2px">1.200mm</div>
 <div class="btn" style="left:10px;top:382px;width:502px;height:22px"></div>
 <div class="t" style="left:10px;top:387.5px;width:502px;text-align:center;letter-spacing:-0.2px">Apply</div>
 <div class="btn" style="left:0px;top:420px;width:259px;height:28px"></div>
 <div class="btn" style="left:263px;top:420px;width:259px;height:28px"></div>
 <svg class="a" style="left:105px;top:423px" width="20" height="20" viewBox="0 0 20 20"><path d="M1 7 L8 1 L8 4.5 Q17 4 17 12 Q17 17 12 19 Q14 15 13 12 Q12 9.5 8 10 L8 13 Z" fill="#f0c830" stroke="#c09010" stroke-width="0.8"/></svg>
 <svg class="a" style="left:369px;top:423px" width="20" height="20" viewBox="0 0 20 20"><path d="M19 7 L12 1 L12 4.5 Q3 4 3 12 Q3 17 8 19 Q6 15 7 12 Q8 9.5 12 10 L12 13 Z" fill="#d8d8d8" stroke="#b0b0b0" stroke-width="0.8"/></svg>
 <div class="t" style="left:129px;top:427.7px;letter-spacing:-0.2px">Undo</div>
 <div class="t" style="left:392px;top:427.7px;letter-spacing:-0.2px;color:#808080">Redo</div>
 <div class="a" style="left:0px;top:459px;width:523px;height:95px;border:2px solid #d4d4d4"></div>
 <div class="a" style="left:6px;top:452px;width:60px;height:14px;background:#fff"></div>
 <svg class="a" style="left:9px;top:457px" width="9" height="6" viewBox="0 0 9 6"><path d="M0 0 L9 0 L4.5 5.5Z" fill="#000"/></svg>
 <div class="t" style="left:23px;top:453.7px;letter-spacing:-0.2px">Masking</div>
 <div class="t" style="left:5.5px;top:477.4px;letter-spacing:0.05px">Editable area:</div>
 <div class="combo" style="left:140px;top:473px;width:376px;height:24px"><div class="a" style="left:354px;top:4px;width:1px;height:15px;background:#c8c8c8"></div></div>
 <svg class="a" style="left:499px;top:478px" width="10" height="14" viewBox="0 0 10 14"><path d="M1 5.5 L5 1 L9 5.5Z M1 8.5 L5 13 L9 8.5Z" fill="#000"/></svg>
 <div class="t" style="left:144px;top:478.2px;letter-spacing:-0.2px">Everywhere</div>
 <div class="t" style="left:5.5px;top:503.4px;letter-spacing:0px">Editable intensity range:</div>
 <div class="a" style="left:142px;top:502px;width:13px;height:13px;border:1px solid #a8a8a8;background:#fff"></div>
 <div class="t" style="left:5.5px;top:529.4px;letter-spacing:0.04px">Overwrite other segments:</div>
 <div class="combo" style="left:140px;top:525px;width:376px;height:22px"><div class="a" style="left:354px;top:3px;width:1px;height:15px;background:#c8c8c8"></div></div>
 <svg class="a" style="left:499px;top:529px" width="10" height="14" viewBox="0 0 10 14"><path d="M1 5.5 L5 1 L9 5.5Z M1 8.5 L5 13 L9 8.5Z" fill="#000"/></svg>
 <div class="t" style="left:144px;top:529.7px;letter-spacing:-0.2px">Visible segments</div>
 <div class="btn" style="left:0px;top:571px;width:537px;height:22px;border-color:#a8a8a8"></div>
 <svg class="a" style="left:6px;top:578px" width="9" height="6" viewBox="0 0 9 6"><path d="M0 0 L9 0 L4.5 5.5Z" fill="#000"/></svg>
 <div class="t" style="left:22px;top:575.7px;letter-spacing:-0.05px">Data Probe: C:/Users/msepty/Desktop/...2018-06-21-Scene.mrml</div>
 <div class="a" style="left:12px;top:607px;width:13px;height:13px;border:1px solid #a8a8a8;background:#fff"></div>
 <div class="t" style="left:29.5px;top:607.7px;letter-spacing:-0.4px">Show Zoomed Slice</div>
 <div class="t" style="left:15.5px;top:632.7px;">L</div>
 <div class="t" style="left:15.5px;top:649.0px;">F</div>
 <div class="t" style="left:15.5px;top:664.7px;">B</div>
</div>

<!-- 3D VIEW -->
<div id="view3d" class="a" style="left:543px;top:82px;width:823px;height:399px;background:linear-gradient(#7678bc,#c1c3e8)">
 <div class="a" style="left:0;top:0;width:823px;height:15px;background:linear-gradient(#7282e4 0,#6676d4 1.5px,#6676d4 3px,#7686ec 5px,#7888ee 12px,#6874d0 15px)"></div>
 <svg class="a" style="left:4px;top:5px" width="9" height="5" viewBox="0 0 9 5"><path d="M0 2.5 H3" stroke="#555" stroke-width="0.8"/><rect x="3" y="0.8" width="2.2" height="3.4" rx="0.8" fill="#3a3a3a"/><rect x="5" y="1.8" width="2" height="1.4" fill="#3a3a3a"/><rect x="6.8" y="0.8" width="1.4" height="3.4" fill="#3a3a3a"/></svg>
 <div class="a" style="left:17px;top:0;width:12px;height:15px;background:#b4bcf8"></div>
 <div class="a" style="left:20.5px;top:1px;font-family:'Liberation Serif',serif;font-weight:bold;font-size:12px;line-height:14px;color:#000">1</div>
 <svg class="a" style="left:33px;top:2px" width="12" height="12" viewBox="0 0 12 12"><rect x="0.5" y="0.5" width="11" height="11" fill="#5a68b0" opacity="0.6"/><rect x="2.5" y="2.5" width="7" height="7" fill="#44508a"/><rect x="3.6" y="3.6" width="4.8" height="4.8" fill="none" stroke="#e8e8f8" stroke-width="1.1"/><rect x="5.4" y="5.4" width="1.2" height="1.2" fill="#223"/><path d="M6 0 V2.5 M6 9.5 V12 M0 6 H2.5 M9.5 6 H12" stroke="#1a1a30" stroke-width="1"/></svg>
 <svg class="a" style="left:0;top:15px" width="823" height="384" viewBox="543 97 823 384">
  <path d="M599.5 97 V411.5 M599.5 411.5 L1155.5 413.8 M1155.5 97 V414 M599.5 411.5 L543 429.5 M1155.5 414 L1256 480" stroke="#ff00ff" stroke-width="1.2" fill="none"/>
  <path d="M875 231 V204.5 H888.5 L893.5 209 V214 L888.5 217.5 H875" stroke="#fff" stroke-width="3.5" fill="none" stroke-linejoin="miter"/>
  <path d="M1332 133 L1338.8 133 L1335 178 L1363 178 L1362.5 183.5 L1328.3 183.5 Z" fill="#fff"/>
 </svg>
</div>
<div id="seg3d">
 <svg class="a" style="left:860px;top:195px" width="190" height="190" viewBox="860 195 190 190">
  <defs>
   <radialGradient id="segg" cx="0.45" cy="0.45" r="0.7"><stop offset="0" stop-color="#ad7d74"/><stop offset="0.7" stop-color="#a2736b"/><stop offset="1" stop-color="#80584f"/></radialGradient>
   <filter id="sblur" x="-20%" y="-20%" width="140%" height="140%"><feGaussianBlur stdDeviation="3.2"/></filter>
   <filter id="sgrain" x="0" y="0" width="100%" height="100%" color-interpolation-filters="sRGB"><feTurbulence type="fractalNoise" baseFrequency="0.45 0.06" numOctaves="2" seed="11" result="n"/><feColorMatrix in="n" type="matrix" values="1 0 0 0 0  1 0 0 0 0  1 0 0 0 0  0 0 0 0 1" result="g"/><feComposite in="SourceGraphic" in2="g" operator="arithmetic" k1="0.3" k2="0.85" k3="0" k4="0"/></filter>
   <clipPath id="segc"><path d="M882.4 238.3 Q883.0 234.7 884.5 231.0 Q886.0 227.3 888.5 225.2 Q891.0 223.0 898.5 222.0 Q905.9 221.0 912.7 218.9 Q919.5 216.8 924.5 214.6 Q929.4 212.4 932.5 212.7 Q935.6 213.0 940.5 213.9 Q945.5 214.9 956.0 215.9 Q966.5 216.8 969.0 219.6 Q971.4 222.3 974.5 227.9 Q977.6 233.5 981.3 239.7 Q985.0 245.8 987.5 251.4 Q990.0 257.0 996.6 269.8 Q1003.2 282.5 1008.2 290.6 Q1013.1 298.7 1016.9 304.9 Q1020.6 311.1 1022.5 316.7 Q1024.3 322.3 1025.5 326.1 Q1026.8 329.8 1030.5 333.5 Q1034.3 337.2 1034.3 339.7 Q1034.3 342.2 1029.9 348.4 Q1025.6 354.7 1021.8 360.3 Q1018.1 365.9 1009.4 367.1 Q1000.7 368.4 997.0 369.3 Q993.2 370.2 987.6 366.8 Q982.0 363.4 973.3 361.5 Q964.6 359.7 959.6 355.9 Q954.6 352.2 951.5 347.2 Q948.4 342.2 944.0 339.7 Q939.7 337.2 931.6 336.0 Q923.5 334.8 915.4 332.9 Q907.3 331.0 898.6 327.9 Q889.9 324.8 886.8 320.4 Q883.7 316.0 882.8 307.4 Q881.8 298.7 880.9 289.4 Q880.0 280.0 880.2 273.4 Q880.5 266.9 881.1 254.4 Q881.8 242.0 882.4 238.3 Z"/></clipPath>
  </defs>
  <path d="M882.4 238.3 Q883.0 234.7 884.5 231.0 Q886.0 227.3 888.5 225.2 Q891.0 223.0 898.5 222.0 Q905.9 221.0 912.7 218.9 Q919.5 216.8 924.5 214.6 Q929.4 212.4 932.5 212.7 Q935.6 213.0 940.5 213.9 Q945.5 214.9 956.0 215.9 Q966.5 216.8 969.0 219.6 Q971.4 222.3 974.5 227.9 Q977.6 233.5 981.3 239.7 Q985.0 245.8 987.5 251.4 Q990.0 257.0 996.6 269.8 Q1003.2 282.5 1008.2 290.6 Q1013.1 298.7 1016.9 304.9 Q1020.6 311.1 1022.5 316.7 Q1024.3 322.3 1025.5 326.1 Q1026.8 329.8 1030.5 333.5 Q1034.3 337.2 1034.3 339.7 Q1034.3 342.2 1029.9 348.4 Q1025.6 354.7 1021.8 360.3 Q1018.1 365.9 1009.4 367.1 Q1000.7 368.4 997.0 369.3 Q993.2 370.2 987.6 366.8 Q982.0 363.4 973.3 361.5 Q964.6 359.7 959.6 355.9 Q954.6 352.2 951.5 347.2 Q948.4 342.2 944.0 339.7 Q939.7 337.2 931.6 336.0 Q923.5 334.8 915.4 332.9 Q907.3 331.0 898.6 327.9 Q889.9 324.8 886.8 320.4 Q883.7 316.0 882.8 307.4 Q881.8 298.7 880.9 289.4 Q880.0 280.0 880.2 273.4 Q880.5 266.9 881.1 254.4 Q881.8 242.0 882.4 238.3 Z" fill="url(#segg)"/>
  <g clip-path="url(#segc)">
   <rect x="870" y="205" width="170" height="170" fill="#a87a70" filter="url(#sgrain)" opacity="0.25"/>
   <g filter="url(#sblur)">
    <ellipse cx="915" cy="270" rx="26" ry="45" fill="#b08278" opacity="0.6"/>
    <ellipse cx="1000" cy="320" rx="18" ry="30" fill="#b08278" opacity="0.55"/>
    <path d="M944 218 Q950 260 951 295 Q953 325 962 350 Q968 362 975 368" stroke="#5a3c38" stroke-width="8" fill="none" opacity="0.8"/>
    <path d="M952 295 Q956 330 970 362" stroke="#4e3430" stroke-width="12" fill="none" opacity="0.65"/>
    <path d="M965 216 Q975 225 985 245" stroke="#5e403c" stroke-width="5" fill="none" opacity="0.55"/>
    <path d="M983 262 Q1000 290 1018 310" stroke="#6a4844" stroke-width="4" fill="none" opacity="0.5"/>
    <path d="M995 368 Q1020 362 1034 342" stroke="#5e403c" stroke-width="6" fill="none" opacity="0.6"/>
    <path d="M882 300 L882 240 Q888 224 905 221" stroke="#7a5650" stroke-width="4" fill="none" opacity="0.5"/>
    <path d="M892 326 Q920 334 944 338" stroke="#6e4c46" stroke-width="4" fill="none" opacity="0.45"/>
   </g>
  </g>
  <path d="M882.4 238.3 Q883.0 234.7 884.5 231.0 Q886.0 227.3 888.5 225.2 Q891.0 223.0 898.5 222.0 Q905.9 221.0 912.7 218.9 Q919.5 216.8 924.5 214.6 Q929.4 212.4 932.5 212.7 Q935.6 213.0 940.5 213.9 Q945.5 214.9 956.0 215.9 Q966.5 216.8 969.0 219.6 Q971.4 222.3 974.5 227.9 Q977.6 233.5 981.3 239.7 Q985.0 245.8 987.5 251.4 Q990.0 257.0 996.6 269.8 Q1003.2 282.5 1008.2 290.6 Q1013.1 298.7 1016.9 304.9 Q1020.6 311.1 1022.5 316.7 Q1024.3 322.3 1025.5 326.1 Q1026.8 329.8 1030.5 333.5 Q1034.3 337.2 1034.3 339.7 Q1034.3 342.2 1029.9 348.4 Q1025.6 354.7 1021.8 360.3 Q1018.1 365.9 1009.4 367.1 Q1000.7 368.4 997.0 369.3 Q993.2 370.2 987.6 366.8 Q982.0 363.4 973.3 361.5 Q964.6 359.7 959.6 355.9 Q954.6 352.2 951.5 347.2 Q948.4 342.2 944.0 339.7 Q939.7 337.2 931.6 336.0 Q923.5 334.8 915.4 332.9 Q907.3 331.0 898.6 327.9 Q889.9 324.8 886.8 320.4 Q883.7 316.0 882.8 307.4 Q881.8 298.7 880.9 289.4 Q880.0 280.0 880.2 273.4 Q880.5 266.9 881.1 254.4 Q881.8 242.0 882.4 238.3 Z" fill="none" stroke="#3a2624" stroke-width="1.1"/>
 </svg>
</div>

<!-- SLICE VIEWS -->
<div id="slices" class="a" style="left:543px;top:487px;width:823px;height:206px;background:#000">
 <!-- red bar -->
 <div class="a" style="left:0;top:0;width:274px;height:15px;background:linear-gradient(#e84a30,#f44e30 40%,#ee4a2e)"></div>
 <div class="a" style="left:17px;top:0;width:12px;height:15px;background:#fa8a78"></div>
 <div class="a" style="left:196px;top:0;width:78px;height:15px;background:#fa8070"></div>
 <!-- yellow bar -->
 <div class="a" style="left:275px;top:0;width:273px;height:15px;background:linear-gradient(#d8c040,#ecd44c 40%,#e6cf48)"></div>
 <div class="a" style="left:292px;top:0;width:12px;height:15px;background:#fde680"></div>
 <div class="a" style="left:470px;top:0;width:78px;height:15px;background:#fde680"></div>
 <!-- green bar -->
 <div class="a" style="left:549px;top:0;width:274px;height:15px;background:linear-gradient(#60a848,#6cb84e 40%,#68b04a)"></div>
 <div class="a" style="left:566px;top:0;width:12px;height:15px;background:#8ee070"></div>
 <div class="a" style="left:744px;top:0;width:79px;height:15px;background:#8ee070"></div>
 <div class="a" style="left:274px;top:0;width:1px;height:206px;background:#55557a"></div>
 <div class="a" style="left:548px;top:0;width:1px;height:206px;background:#55557a"></div>
</div>
<div id="ct">
 <svg class="a" style="left:543px;top:502px" width="823" height="191" viewBox="543 502 823 191">
  <defs>
   <filter id="b1" x="-20%" y="-20%" width="140%" height="140%"><feGaussianBlur stdDeviation="1"/></filter>
   <filter id="b2" x="-20%" y="-20%" width="140%" height="140%"><feGaussianBlur stdDeviation="2.5"/></filter>
   <filter id="b4" x="-30%" y="-30%" width="160%" height="160%"><feGaussianBlur stdDeviation="5"/></filter>
   <filter id="grain" x="0" y="0" width="100%" height="100%" color-interpolation-filters="sRGB"><feTurbulence type="fractalNoise" baseFrequency="0.45" numOctaves="2" seed="7" result="n"/><feColorMatrix in="n" type="matrix" values="1 0 0 0 0  1 0 0 0 0  1 0 0 0 0  0 0 0 0 1" result="g"/><feComposite in="SourceGraphic" in2="g" operator="arithmetic" k1="0.36" k2="0.82" k3="0" k4="0"/></filter>
   <clipPath id="cax"><rect x="543" y="502" width="274" height="191"/></clipPath>
   <clipPath id="csg"><rect x="818" y="502" width="273" height="191"/></clipPath>
   <clipPath id="ccr"><rect x="1092" y="502" width="274" height="191"/></clipPath>
  </defs>
  <rect x="543" y="502" width="823" height="191" fill="#000"/>
  <!-- AXIAL -->
  <g clip-path="url(#cax)"><g filter="url(#grain)">
   <path d="M540 500 L791 500 L807.5 534 L812.7 566 L815 600 L817 620 L817 672 L806 682 L786 693 L540 693 Z" fill="#727272"/>
   <g filter="url(#b2)">
    <path d="M540 500 L582 500 Q560 530 555 570 Q552 620 562 693 L540 693Z" fill="#5a5a5a"/>
    <path d="M556 693 Q650 705 790 686 L786 693Z" fill="#4a4a4a"/>
    <path d="M553 600 Q553 540 580 502 L740 502 Q790 530 795 600 Q798 650 770 682 Q700 695 600 688 Q565 660 553 600Z" fill="#909090"/>
    <path d="M566 598 Q568 540 592 502 L722 502 Q760 525 776 560 Q786 600 780 636 Q766 668 730 680 L620 682 Q585 665 572 636 Z" fill="#ababab"/>
    <path d="M722 502 Q760 525 776 560 L772 566 Q752 530 712 502Z" fill="#6a6a6a"/>
    <path d="M760 566 Q784 575 784 610 Q780 625 766 620 Q754 600 756 575Z" fill="#626262"/>
    <path d="M592 540 Q610 520 640 512 L652 505 Q640 535 626 565 Q610 585 590 595 Z" fill="#9c9c9c"/>
    <path d="M540 520 L600 502 L652 505 Q636 540 622 570 Q600 600 560 620 Z" fill="#a0a0a0" opacity="0.7"/>
    <path d="M659 500 Q652 515 642 533 Q635 548 629 562" stroke="#6e6e6e" stroke-width="3" fill="none"/>
    <path d="M666 522 Q674 540 672 560 Q662 570 649 578" stroke="#8a8a8a" stroke-width="2.5" fill="none"/>
    <path d="M690 584 Q700 592 710 594" stroke="#707070" stroke-width="5" fill="none"/>
    
    
    <path d="M566 600 Q575 560 600 520" stroke="#9e9e9e" stroke-width="6" fill="none" opacity="0.6"/>
   </g>
   <g filter="url(#b1)">
    <path d="M574 538 Q566 560 561 590 Q560 625 576 650 Q584 660 592 664" stroke="#f2f2f2" stroke-width="2.2" fill="none"/>
    <path d="M777 543 Q786 560 789 591 Q790 625 784 643 Q774 664 750 680" stroke="#eeeeee" stroke-width="2.8" fill="none"/>
    <path d="M740 503 Q748 506 754 512" stroke="#f4f4f4" stroke-width="3" fill="none"/>
    <path d="M575 548 Q569 572 567 600" stroke="#666" stroke-width="1.5" fill="none"/>
    <circle cx="681" cy="612" r="11" fill="#b4b4b4" stroke="#8a8a8a" stroke-width="1.5"/>
    <path d="M660 632 L672 629 L684 629 L694 632 L698 645 L702 657 L712 663 L727 674 L722 678 L704 670 L696 672 L690 684 L686 684 L683 674 L674 670 L658 679 L642 684 L639 681 L656 669 L664 658 L661 646 Z" fill="#f6f6f6"/>
    <circle cx="684" cy="657" r="4.5" fill="#989898"/>
    <path d="M731 569 L733 577 M739 574 L742 571 M734 583 L736 587 M728 580 L726 584 M744 577 L745 580" stroke="#111" stroke-width="2"/>
   </g>
   <path d="M710 633 Q708 625 716 621 L744 610 Q756 605 760 614 Q762 624 754 634 L740 648 Q728 658 718 654 Q710 648 710 633Z" fill="#bf958a" stroke="#c87a6a" stroke-width="0.8"/>
  </g></g>
  <!-- SAGITTAL -->
  <g clip-path="url(#csg)"><g filter="url(#grain)">
   <path d="M938.4 502 L904.3 530 L884.2 554 L868.2 572 L854 600 L848 615 L842 645 L844 675 L844 693 L1038.7 693 L1038.7 502 Z" fill="#727272"/>
   <g filter="url(#b2)">
    <path d="M955 502 L922 530 L902 552 L886 576 L872 604 L864 640 L862 693 L1030 693 L1032 502 Z" fill="#8e8e8e"/>
    <path d="M962 508 L934 540 L912 568 L898 600 L888 640 L884 693 L1012 693 Q1024 640 1026 600 L1026 502 Z" fill="#a6a6a6"/>
    <path d="M870 610 Q900 600 905 640 Q900 693 880 693 L866 693 Q862 650 870 610Z" fill="#858585"/>
    <circle cx="888" cy="630" r="7" fill="#ababab"/>
    <path d="M1026 502 L1038.7 502 L1038.7 693 L1018 693 Q1028 640 1026 502Z" fill="#8a8a8a"/>
    <path d="M960 640 Q980 630 1000 650 Q995 680 975 685 Q955 675 960 640Z" fill="#9a9a9a"/>
    <ellipse cx="905" cy="675" rx="14" ry="10" fill="#8a8a8a"/>
    <ellipse cx="940" cy="655" rx="10" ry="8" fill="#959595"/>
    <ellipse cx="878" cy="645" rx="8" ry="12" fill="#7e7e7e"/>
    <path d="M950 560 Q975 565 985 575" stroke="#8e8e8e" stroke-width="6" fill="none"/>
   </g>
   <g filter="url(#b1)">
    <path d="M956 504 L948 512 L938 524 L926 536 L912 548 L902 560 L894 572 L886 588" stroke="#f2f2f2" stroke-width="5.5" stroke-dasharray="7 4" fill="none"/>
    <ellipse cx="950" cy="509" rx="6" ry="7" transform="rotate(35 950 509)" fill="#fafafa"/>
    <path d="M948 530 Q955 545 960 560" stroke="#8a8a8a" stroke-width="5" fill="none"/>
    <path d="M994.5 503 L1001 511 L1010.6 524 L1016.6 535 L1019.6 548 L1021.6 562 L1022.6 578 L1021.6 592 L1018.6 607 L1012.6 623 L1004.6 639 L993.5 656 L986.5 669 L977.5 685" stroke="#f8f8f8" stroke-width="5.5" stroke-dasharray="5 6" fill="none"/>
    <path d="M915 552 Q920 540 935 534 Q946 530 946 535 Q942 545 925 550 Z" fill="#000" stroke="#000" stroke-width="3"/>
    <path d="M964.4 514 L974.5 508 L994.5 509 L998.5 520 L1002.6 542 L1010.6 562 L1012.6 568 L998.5 568 L982.5 562 L974.5 550 L970.5 532 L964.4 522 Z" fill="#000" stroke="#000" stroke-width="2"/>
    <circle cx="959.4" cy="670" r="4" fill="#fff"/>
    <circle cx="881.2" cy="665" r="4.5" fill="#000"/>
    <path d="M975 560 L978 566 M985 562 L986 568 M990 562 L992 568" stroke="#000" stroke-width="2.5"/>
   </g>
   <rect x="1049" y="502" width="1.3" height="191" fill="#e8e8e8"/>
   <rect x="1073.2" y="502" width="1.3" height="191" fill="#e8e8e8"/>
  </g></g>
  <!-- CORONAL -->
  <g clip-path="url(#ccr)"><g filter="url(#grain)">
   <path d="M1130 502 L1322.7 504 L1332.7 516 L1336.7 538 L1332.7 552 L1322.7 560 L1318.7 566 L1318.7 600 L1318.7 625 L1328.7 655 L1338.7 685 L1340.7 693 L1092 693 L1092 669 L1104 655 L1118 639 L1132 615 L1138 595 L1136 564 L1120 554 L1114 542 L1114 526 L1124 510 Z" fill="#727272"/>
   <rect x="1204" y="499" width="32" height="7" rx="3" fill="#000"/>
   <g filter="url(#b2)">
    <path d="M1185 512 Q1250 505 1290 518 Q1302 560 1308 600 Q1312 650 1314 693 L1146 693 Q1146 640 1150 600 Q1160 550 1185 512Z" fill="#979797"/>
    <path d="M1150 570 Q1200 560 1240 580 L1245 640 Q1230 670 1190 680 L1150 693 Z" fill="#aaaaaa"/>
    <path d="M1240 585 Q1275 585 1290 610 L1288 640 Q1260 650 1240 630 Z" fill="#a4a4a4"/>
    <path d="M1230 630 Q1260 625 1305 650 L1308 693 L1220 693 Z" fill="#7e7e7e"/>
    <circle cx="1265" cy="662" r="8" fill="#a6a6a6"/>
    <circle cx="1228" cy="683" r="8" fill="#a0a0a0"/>
    <ellipse cx="1248" cy="648" rx="9" ry="6" fill="#9c9c9c"/>
    <ellipse cx="1290" cy="650" rx="6" ry="9" fill="#a8a8a8"/>
    <ellipse cx="1278" cy="680" rx="10" ry="7" fill="#9a9a9a"/>
    <ellipse cx="1205" cy="670" rx="12" ry="8" fill="#8a8a8a"/>
    <ellipse cx="1262" cy="605" rx="22" ry="14" fill="#a8a8a8"/>
    <path d="M1232 595 Q1225 625 1205 655" stroke="#888" stroke-width="4" fill="none"/>
    <path d="M1092 669 L1104 655 L1118 639 L1132 630 L1146 693 L1092 693Z" fill="#858585"/>
   </g>
   <g filter="url(#b1)">
    <path d="M1200 522 Q1226 510 1252 522 L1252 532 Q1226 527 1200 532 Z" fill="#f0f0f0"/>
    <circle cx="1212" cy="517" r="4" fill="#fff"/><circle cx="1238" cy="515" r="4.5" fill="#fff"/><circle cx="1204" cy="526" r="3.5" fill="#fff"/><circle cx="1250" cy="526" r="3" fill="#fff"/>
    <path d="M1176 542 L1170 558 L1164 578 L1158 594 L1152 607 L1150 625 L1149 645" stroke="#f4f4f4" stroke-width="4" stroke-dasharray="4 5" fill="none"/>
    <path d="M1266.5 530 L1280.6 544 L1286.6 566 L1292.6 586 L1296.6 599 L1300.6 615 L1302.6 635 L1302.6 657" stroke="#f4f4f4" stroke-width="4" stroke-dasharray="4 5" fill="none"/>
    <path d="M1174 556 L1178 544 L1190 531 L1208 532 L1212 542 L1208 556 L1202 560 L1190 554 L1178 561 Z" fill="#000" stroke="#000" stroke-width="2"/>
    <path d="M1242.5 532 L1256.5 526 L1266.5 528 L1278.6 542 L1284.6 560 L1287.6 576 L1276.6 578 L1262.5 568 L1252.5 554 L1244.5 542 Z" fill="#000" stroke="#000" stroke-width="2"/>
    <circle cx="1183" cy="659" r="4.5" fill="#000"/>
    <circle cx="1230" cy="687" r="3" fill="#fff"/>
   </g>
  </g></g>
 </svg>
 <div class="a" style="left:548px;top:656px;font-family:'Liberation Serif',serif;font-size:15px;line-height:17px;color:#fff;text-shadow:1px 1px 0 #000;white-space:nowrap">B: 2: sa...ion_1</div>
 <div class="a" style="left:822px;top:656px;font-family:'Liberation Serif',serif;font-size:15px;line-height:17px;color:#fff;text-shadow:1px 1px 0 #000;white-space:nowrap">B: 2: sa...ion_1</div>
 <div class="a" style="left:1096px;top:656px;font-family:'Liberation Serif',serif;font-size:15px;line-height:17px;color:#fff;text-shadow:1px 1px 0 #000;white-space:nowrap">B: 2: sa...ion_1</div>
</div>
<div id="slicebars">
 <svg class="a" style="left:547px;top:492px" width="9" height="5" viewBox="0 0 9 5"><path d="M0 2.5 H3" stroke="#555" stroke-width="0.8"/><rect x="3" y="0.8" width="2.2" height="3.4" rx="0.8" fill="#3a3a3a"/><rect x="5" y="1.8" width="2" height="1.4" fill="#3a3a3a"/><rect x="6.8" y="0.8" width="1.4" height="3.4" fill="#3a3a3a"/></svg>
 <div class="t" style="left:561px;top:488.6px;font-size:11px;line-height:12px;color:#000">R</div>
 <svg class="a" style="left:576px;top:489px" width="11" height="11" viewBox="0 0 11 11"><rect x="2" y="2" width="7" height="7" fill="#7a1a0c"/><rect x="2" y="2" width="3.5" height="3.5" fill="#f08a78" opacity="0.8"/><rect x="5.5" y="5.5" width="3.5" height="3.5" fill="#000" opacity="0.35"/><circle cx="0.6" cy="5.5" r="0.7" fill="#222"/><circle cx="10.4" cy="5.5" r="0.7" fill="#222"/><circle cx="5.5" cy="0.6" r="0.7" fill="#222"/><circle cx="5.5" cy="10.4" r="0.7" fill="#222"/></svg>
 <div class="a" style="left:597px;top:492px;width:138px;height:6px;border:1px solid #5a6a80;background:#eaeaea"></div>
 <div class="a" style="left:598px;top:493px;width:48px;height:4px;background:linear-gradient(#a8cdf0,#7aaade)"></div>
 <div class="a" style="left:646px;top:489px;width:9px;height:11px;border:1px solid #9a9a9a;border-radius:3px;background:radial-gradient(#fff,#e8e8e8)"></div>
 <div class="t" style="left:740.5px;top:489px;font-size:10.6px;line-height:12px;letter-spacing:0.1px;color:#000">S: -140.750mm</div>
 <svg class="a" style="left:822px;top:492px" width="9" height="5" viewBox="0 0 9 5"><path d="M0 2.5 H3" stroke="#555" stroke-width="0.8"/><rect x="3" y="0.8" width="2.2" height="3.4" rx="0.8" fill="#3a3a3a"/><rect x="5" y="1.8" width="2" height="1.4" fill="#3a3a3a"/><rect x="6.8" y="0.8" width="1.4" height="3.4" fill="#3a3a3a"/></svg>
 <div class="t" style="left:836px;top:488.6px;font-size:11px;line-height:12px;color:#000">Y</div>
 <svg class="a" style="left:851px;top:489px" width="11" height="11" viewBox="0 0 11 11"><rect x="2" y="2" width="7" height="7" fill="#6a5a10"/><rect x="2" y="2" width="3.5" height="3.5" fill="#f0e090" opacity="0.8"/><rect x="5.5" y="5.5" width="3.5" height="3.5" fill="#000" opacity="0.35"/><circle cx="0.6" cy="5.5" r="0.7" fill="#222"/><circle cx="10.4" cy="5.5" r="0.7" fill="#222"/><circle cx="5.5" cy="0.6" r="0.7" fill="#222"/><circle cx="5.5" cy="10.4" r="0.7" fill="#222"/></svg>
 <div class="a" style="left:872px;top:492px;width:137px;height:6px;border:1px solid #5a6a80;background:#eaeaea"></div>
 <div class="a" style="left:873px;top:493px;width:72px;height:4px;background:linear-gradient(#a8cdf0,#7aaade)"></div>
 <div class="a" style="left:945px;top:489px;width:9px;height:11px;border:1px solid #9a9a9a;border-radius:3px;background:radial-gradient(#fff,#e8e8e8)"></div>
 <div class="t" style="left:1015.5px;top:489px;font-size:10.6px;line-height:12px;letter-spacing:0.1px;color:#000">R: 36.280mm</div>
 <svg class="a" style="left:1096px;top:492px" width="9" height="5" viewBox="0 0 9 5"><path d="M0 2.5 H3" stroke="#555" stroke-width="0.8"/><rect x="3" y="0.8" width="2.2" height="3.4" rx="0.8" fill="#3a3a3a"/><rect x="5" y="1.8" width="2" height="1.4" fill="#3a3a3a"/><rect x="6.8" y="0.8" width="1.4" height="3.4" fill="#3a3a3a"/></svg>
 <div class="t" style="left:1110px;top:488.6px;font-size:11px;line-height:12px;color:#000">G</div>
 <svg class="a" style="left:1125px;top:489px" width="11" height="11" viewBox="0 0 11 11"><rect x="2" y="2" width="7" height="7" fill="#2a5a1a"/><rect x="2" y="2" width="3.5" height="3.5" fill="#a0e090" opacity="0.8"/><rect x="5.5" y="5.5" width="3.5" height="3.5" fill="#000" opacity="0.35"/><circle cx="0.6" cy="5.5" r="0.7" fill="#222"/><circle cx="10.4" cy="5.5" r="0.7" fill="#222"/><circle cx="5.5" cy="0.6" r="0.7" fill="#222"/><circle cx="5.5" cy="10.4" r="0.7" fill="#222"/></svg>
 <div class="a" style="left:1146px;top:492px;width:138px;height:6px;border:1px solid #5a6a80;background:#eaeaea"></div>
 <div class="a" style="left:1147px;top:493px;width:67px;height:4px;background:linear-gradient(#a8cdf0,#7aaade)"></div>
 <div class="a" style="left:1214px;top:489px;width:9px;height:11px;border:1px solid #9a9a9a;border-radius:3px;background:radial-gradient(#fff,#e8e8e8)"></div>
 <div class="t" style="left:1290px;top:489px;font-size:10.6px;line-height:12px;letter-spacing:0.1px;color:#000">A: -14.619mm</div>
 <div class="a" style="left:934px;top:482px;width:40px;height:4px;background:repeating-linear-gradient(90deg,#c8c8c8 0 1px,#e0e0e0 1px 2px)"></div>
</div>

<!-- TASKBAR -->
<div id="taskbar" class="a" style="left:0;top:728px;width:1366px;height:40px;background:linear-gradient(90deg,#1c0c1c 0%,#1f0e22 25%,#221028 45%,#1e0c18 58%,#1c0a10 75%,#1e0a0c 90%,#220c0c 100%)">
 <!-- windows logo -->
 <svg class="a" style="left:16px;top:12px" width="17" height="17" viewBox="0 0 17 17"><path d="M0 2.3 L7 1.3 V7.9 H0Z M8 1.1 L17 0 V7.9 H8Z M0 8.9 H7 V15.5 L0 14.5Z M8 8.9 H17 V16.8 L8 15.7Z" fill="#fff"/></svg>
 <!-- search -->
 <svg class="a" style="left:63px;top:11px" width="19" height="18" viewBox="0 0 19 18"><circle cx="11.5" cy="6.8" r="5.6" fill="none" stroke="#fff" stroke-width="1.3"/><path d="M7.5 10.8 L1 17.3" stroke="#fff" stroke-width="1.5"/></svg>
 <!-- task view -->
 <svg class="a" style="left:111px;top:11px" width="18" height="18" viewBox="0 0 18 18"><path d="M0.5 1 H12.5 M0.5 17 H12.5 M2.5 4 H10.5 V14 H2.5Z M15.5 0.5 V5 M15.5 8 V17.5" stroke="#fff" stroke-width="1.2" fill="none"/><rect x="14" y="5" width="3" height="3" fill="#fff"/></svg>
 <!-- edge -->
 <svg class="a" style="left:160px;top:9px" width="23" height="22" viewBox="0 0 23 22">
  <path d="M2 10 Q3 1 12 0.5 Q21 0.5 22 10 L22 12.5 H8 Q8.5 17 13 17.5 Q17 18 21 15.5 V20 Q17 22 12.5 21.8 Q3.5 21 3.5 13.5 Q3.5 8 8 5.5 Q6 8 6.5 9.5 H16 Q16 5 11.5 4.5 Q5 4.5 2 10Z" fill="#1e8de8"/>
 </svg>
 <!-- folder -->
 <svg class="a" style="left:208px;top:9px" width="24" height="22" viewBox="0 0 24 22">
  <path d="M1 3 H8 L10 5 H23 V20 H1Z" fill="#f0c850"/>
  <path d="M1 7 H23 V20 H1Z" fill="#fde48c"/>
  <path d="M7 13 H17 V21 H14 V17 H10 V21 H7Z" fill="#2a9ae0"/>
  <rect x="2" y="4" width="6" height="2" fill="#2a9ae0"/>
 </svg>
 <!-- gift -->
 <svg class="a" style="left:257px;top:8px" width="25" height="25" viewBox="0 0 25 25">
  <rect x="0" y="0" width="25" height="25" rx="4" fill="#fff"/>
  <rect x="3" y="9" width="19" height="4" fill="#c01818"/><rect x="4.5" y="13" width="16" height="9" fill="#c01818"/>
  <rect x="11.5" y="8" width="2" height="15" fill="#fff"/>
  <path d="M12.5 8 Q8 2 6 5 Q6 8 12.5 8 Q17 8 19 5 Q17 2 12.5 8Z" fill="none" stroke="#c01818" stroke-width="1.6"/>
 </svg>
 <!-- slicer active -->
 <div class="a" style="left:294px;top:0;width:45px;height:40px;background:#3c2c38"></div>
 <div class="a" style="left:339px;top:0;width:2px;height:40px;background:#2a1a24"></div>
 <svg class="a" style="left:305px;top:8px" width="26" height="26" viewBox="0 0 26 26">
  <defs><radialGradient id="tsph" cx="0.3" cy="0.35" r="0.8"><stop offset="0" stop-color="#f4f4f8"/><stop offset="0.5" stop-color="#b8bac8"/><stop offset="1" stop-color="#5a4a50"/></radialGradient></defs>
  <circle cx="12.5" cy="13" r="11.5" fill="url(#tsph)"/>
  <path d="M11 2 Q18 1 23 6 L23 14 L11 14Z" fill="#3d3f5a"/>
  <rect x="13" y="5" width="8" height="8" fill="#e8a020"/><rect x="13" y="9" width="4" height="4" fill="#2070d0"/><rect x="17" y="5" width="4" height="4" fill="#e03020"/><rect x="17" y="9" width="4" height="4" fill="#30a040"/>
 </svg>
 <!-- app icon -->
 <svg class="a" style="left:355px;top:9px" width="22" height="21" viewBox="0 0 22 21">
  <rect x="0" y="1" width="22" height="19" fill="#f0f0f0" stroke="#aaa" stroke-width="0.6"/>
  <rect x="2" y="4" width="11" height="13" fill="#3a9a7a"/><rect x="2" y="4" width="11" height="6" fill="#8ac8b0"/>
  <path d="M15 6 H20 M15 9 H20 M15 12 H20 M15 15 H20" stroke="#888" stroke-width="1"/><rect x="19" y="3" width="1.5" height="7" fill="#30a060"/>
 </svg>
 <!-- word -->
 <svg class="a" style="left:403px;top:8px" width="24" height="24" viewBox="0 0 24 24">
  <path d="M8 2 L22 0.5 V22 L8 21Z" fill="#fff" stroke="#6a8ac8" stroke-width="0.8"/>
  <path d="M11 6 H20 M11 9 H20 M11 12 H20 M11 15 H20 M11 18 H20" stroke="#5a7ac0" stroke-width="1"/>
  <path d="M1 4 L13 2.5 V21.5 L1 20Z" fill="#2a5ab8"/>
  <text x="7" y="15" font-family="Liberation Sans" font-weight="bold" font-size="9" fill="#fff" text-anchor="middle">W</text>
 </svg>
 <!-- underlines -->
 <div class="a" style="left:151px;top:38px;width:40px;height:2px;background:#7ab0e0"></div>
 <div class="a" style="left:200px;top:38px;width:40px;height:2px;background:#7ab0e0"></div>
 <div class="a" style="left:294px;top:38px;width:45px;height:2px;background:#7ab0e0"></div>
 <div class="a" style="left:347px;top:38px;width:40px;height:2px;background:#7ab0e0"></div>
 <div class="a" style="left:396px;top:38px;width:40px;height:2px;background:#7ab0e0"></div>
 <!-- tray -->
 <svg class="a" style="left:1079px;top:11px" width="17" height="16" viewBox="0 0 17 16"><circle cx="11" cy="4" r="3" fill="none" stroke="#fff" stroke-width="1.1"/><path d="M6.5 13 Q7 8 11 8 Q15 8 16 12" fill="none" stroke="#fff" stroke-width="1.1"/><circle cx="5" cy="8" r="2.6" fill="none" stroke="#fff" stroke-width="1.1"/><path d="M0.8 15.5 Q1.5 11.5 5 11.5 Q8.5 11.5 9 15.5" fill="none" stroke="#fff" stroke-width="1.1"/></svg>
 <svg class="a" style="left:1116px;top:16px" width="14" height="8" viewBox="0 0 14 8"><path d="M0.8 7.5 L7 1.3 L13.2 7.5" fill="none" stroke="#fff" stroke-width="1.3"/></svg>
 <svg class="a" style="left:1139px;top:17px" width="17" height="9" viewBox="0 0 17 9"><rect x="0.6" y="0.6" width="13.8" height="7.8" fill="none" stroke="#fff" stroke-width="1.2"/><rect x="2.5" y="2.5" width="7.5" height="4" fill="#fff"/><rect x="15" y="3" width="1.6" height="3" fill="#fff"/></svg>
 <svg class="a" style="left:1165px;top:13px" width="15" height="15" viewBox="0 0 15 15"><path d="M1 14 Q1 1 14 1 M4 14 Q4 4 14 4 M7 14 Q7 7 14 7" fill="none" stroke="#fff" stroke-width="1.1"/><circle cx="12" cy="12" r="1.6" fill="#fff"/></svg>
 <svg class="a" style="left:1186px;top:14px" width="16" height="14" viewBox="0 0 16 14"><path d="M1 4.5 H4 L8 1 V13 L4 9.5 H1Z" fill="none" stroke="#fff" stroke-width="1.1"/><path d="M10 4.5 L15 9.5 M15 4.5 L10 9.5" stroke="#fff" stroke-width="1.1"/></svg>
 <div class="t" style="left:1213px;top:4px;font-size:12px;line-height:14px;color:#fff;letter-spacing:-0.2px;-webkit-text-stroke:0">ENG</div>
 <div class="t" style="left:1219px;top:20.5px;font-size:12px;line-height:14px;color:#fff;letter-spacing:-0.2px;-webkit-text-stroke:0">FR</div>
 <div class="t" style="left:1264.5px;top:4px;font-size:12px;line-height:14px;color:#fff;letter-spacing:-0.3px;-webkit-text-stroke:0">10:40</div>
 <div class="t" style="left:1248.5px;top:20.5px;font-size:12px;line-height:14px;color:#fff;letter-spacing:-0.35px;-webkit-text-stroke:0">29/06/2018</div>
 <svg class="a" style="left:1324px;top:10px" width="28" height="28" viewBox="0 0 28 28"><path d="M1 1.5 H20 V14 H9 L5 18 V14 H1Z" fill="#fff"/><path d="M4 5 H17 M4 8 H17 M4 11 H13" stroke="#220c0c" stroke-width="1.1"/><circle cx="17" cy="17" r="8" fill="#3a3a3a" stroke="#220c0c" stroke-width="1.2"/><text x="17" y="21.2" font-family="Liberation Sans" font-size="11.5" fill="#fff" text-anchor="middle">2</text></svg>
</div>
<!-- error button -->
<div class="a" style="left:1334px;top:697px;width:31px;height:28px;border:1px solid #8a8a8a;border-radius:3px;background:linear-gradient(#fff,#f0f0f0)"></div>
<svg class="a" style="left:1337px;top:699px" width="25" height="25" viewBox="0 0 25 25">
 <defs><radialGradient id="errg" cx="0.45" cy="0.35" r="0.65"><stop offset="0" stop-color="#f06060"/><stop offset="0.7" stop-color="#c81010"/><stop offset="1" stop-color="#a00808"/></radialGradient></defs>
 <circle cx="12.5" cy="12.5" r="11.5" fill="#d8d8d8" stroke="#999" stroke-width="0.8"/>
 <circle cx="12.5" cy="12.5" r="10" fill="url(#errg)"/>
 <path d="M8 8 L17 17 M17 8 L8 17" stroke="#eee" stroke-width="2.8" stroke-linecap="round"/>
</svg>

</body></html>
